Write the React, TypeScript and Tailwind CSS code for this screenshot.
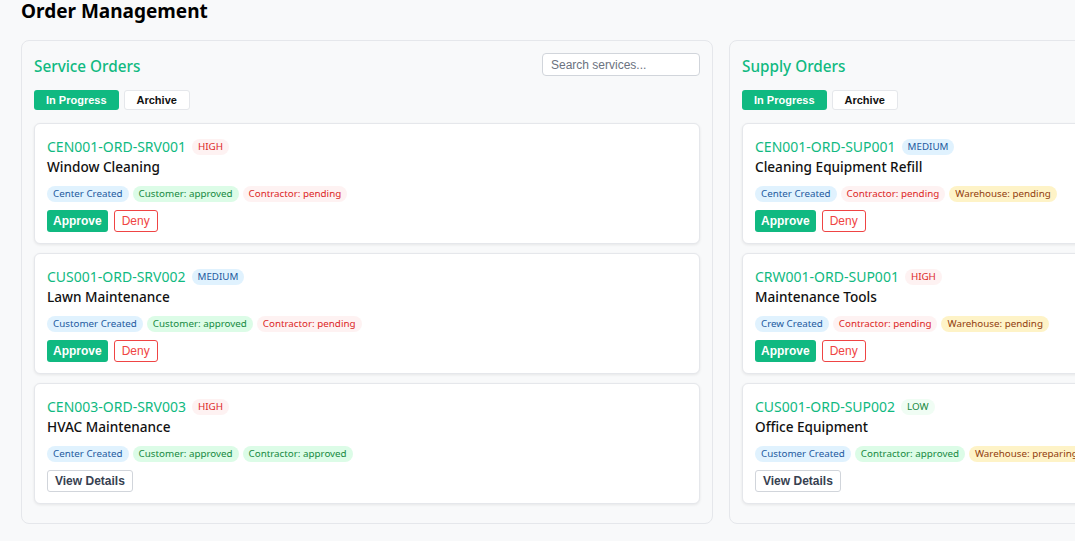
import React from "react";

type Tag = { label: string; tone: "blue" | "green" | "red" | "yellow" };
type Order = {
  id: string;
  priority: "HIGH" | "MEDIUM" | "LOW";
  title: string;
  tags: Tag[];
  actions: "approve" | "view";
};

const toneClass: Record<Tag["tone"], string> = {
  blue: "bg-[#e0f2fe] text-[#1e5a9e]",
  green: "bg-[#dcfce7] text-[#16893f]",
  red: "bg-[#fef2f2] text-[#dc2626]",
  yellow: "bg-[#fef3c7] text-[#92400e]",
};

const prioClass: Record<Order["priority"], string> = {
  HIGH: "bg-[#fef2f2] text-[#dc2626]",
  MEDIUM: "bg-[#e0f2fe] text-[#1e5a9e]",
  LOW: "bg-[#f0fdf4] text-[#16893f]",
};

const services: Order[] = [
  {
    id: "CEN001-ORD-SRV001",
    priority: "HIGH",
    title: "Window Cleaning",
    tags: [
      { label: "Center Created", tone: "blue" },
      { label: "Customer: approved", tone: "green" },
      { label: "Contractor: pending", tone: "red" },
    ],
    actions: "approve",
  },
  {
    id: "CUS001-ORD-SRV002",
    priority: "MEDIUM",
    title: "Lawn Maintenance",
    tags: [
      { label: "Customer Created", tone: "blue" },
      { label: "Customer: approved", tone: "green" },
      { label: "Contractor: pending", tone: "red" },
    ],
    actions: "approve",
  },
  {
    id: "CEN003-ORD-SRV003",
    priority: "HIGH",
    title: "HVAC Maintenance",
    tags: [
      { label: "Center Created", tone: "blue" },
      { label: "Customer: approved", tone: "green" },
      { label: "Contractor: approved", tone: "green" },
    ],
    actions: "view",
  },
];

const supplies: Order[] = [
  {
    id: "CEN001-ORD-SUP001",
    priority: "MEDIUM",
    title: "Cleaning Equipment Refill",
    tags: [
      { label: "Center Created", tone: "blue" },
      { label: "Contractor: pending", tone: "red" },
      { label: "Warehouse: pending", tone: "yellow" },
    ],
    actions: "approve",
  },
  {
    id: "CRW001-ORD-SUP001",
    priority: "HIGH",
    title: "Maintenance Tools",
    tags: [
      { label: "Crew Created", tone: "blue" },
      { label: "Contractor: pending", tone: "red" },
      { label: "Warehouse: pending", tone: "yellow" },
    ],
    actions: "approve",
  },
  {
    id: "CUS001-ORD-SUP002",
    priority: "LOW",
    title: "Office Equipment",
    tags: [
      { label: "Customer Created", tone: "blue" },
      { label: "Contractor: approved", tone: "green" },
      { label: "Warehouse: preparing", tone: "yellow" },
    ],
    actions: "view",
  },
];

const btnFont = "font-['Liberation_Sans',Arial,sans-serif]";

function Card({ o }: { o: Order }) {
  return (
    <div className="h-[121px] bg-white border border-[#e5e7eb] rounded-[6px] shadow-[0_1px_3px_rgba(0,0,0,0.08)] px-3 pt-[13px] flex flex-col">
      <div className="flex items-center gap-[6px] h-5">
        <span className="text-[14px] leading-5 text-[#10b981]">{o.id}</span>
        <span className={`text-[9.8px] leading-4 px-[6px] rounded-full ${prioClass[o.priority]}`}>{o.priority}</span>
      </div>
      <div className="text-[13.6px] leading-5 font-medium text-[#111]">{o.title}</div>
      <div className="flex gap-[4px] mt-[9px]">
        {o.tags.map((t) => (
          <span key={t.label} className={`text-[9.8px] leading-4 px-[6px] rounded-full whitespace-nowrap ${toneClass[t.tone]}`}>
            {t.label}
          </span>
        ))}
      </div>
      <div className="flex gap-[6px] mt-[8px]">
        {o.actions === "approve" ? (
          <>
            <button className={`${btnFont} h-[22px] px-[6px] rounded-[3px] bg-[#10b981] text-white text-[12px] font-bold`}>Approve</button>
            <button className={`${btnFont} h-[22px] px-[7px] rounded-[3px] bg-white border border-[#ef4444] text-[#ef4444] text-[12px]`}>Deny</button>
          </>
        ) : (
          <button className={`${btnFont} h-[22px] px-[7px] rounded-[3px] bg-white border border-[#d1d5db] text-[#374151] text-[12px] font-bold`}>View Details</button>
        )}
      </div>
    </div>
  );
}

function Panel({ title, orders, placeholder }: { title: string; orders: Order[]; placeholder: string }) {
  return (
    <div className="w-[692px] shrink-0 border border-[#e5e7eb] rounded-[8px] bg-[#f8f9fa] px-3 pt-3 pb-[19px]">
      <div className="flex items-center justify-between h-[23px]">
        <h2 className="text-[15.3px] font-medium text-[#10b981] mt-[3px]">{title}</h2>
        <input
          placeholder={placeholder}
          className={`${btnFont} w-[158px] h-[23px] border border-[#d1d5db] rounded-[4px] bg-white px-2 text-[12px] placeholder:text-[#6b7280] outline-none`}
        />
      </div>
      <div className="flex gap-[5px] mt-[14px]">
        <button className={`${btnFont} h-5 px-3 rounded-[3px] bg-[#10b981] text-white text-[11px] font-bold`}>In Progress</button>
        <button className={`${btnFont} h-5 px-3 rounded-[3px] bg-white border border-[#e5e7eb] text-[#111] text-[11px] font-bold`}>Archive</button>
      </div>
      <div className="flex flex-col gap-[9px] mt-[13px]">
        {orders.map((o) => (
          <Card key={o.id} o={o} />
        ))}
      </div>
    </div>
  );
}

export default function App() {
  return (
    <div className="w-[1075px] h-[541px] overflow-hidden bg-[#f8f9fa] font-['Noto_Sans',sans-serif] px-[21px]">
      <h1 className="text-[19px] font-bold leading-[22px] text-black pt-0">Order Management</h1>
      <div className="flex gap-[16px] mt-[18px]">
        <Panel title="Service Orders" orders={services} placeholder="Search services..." />
        <Panel title="Supply Orders" orders={supplies} placeholder="Search supplies..." />
      </div>
    </div>
  );
}
